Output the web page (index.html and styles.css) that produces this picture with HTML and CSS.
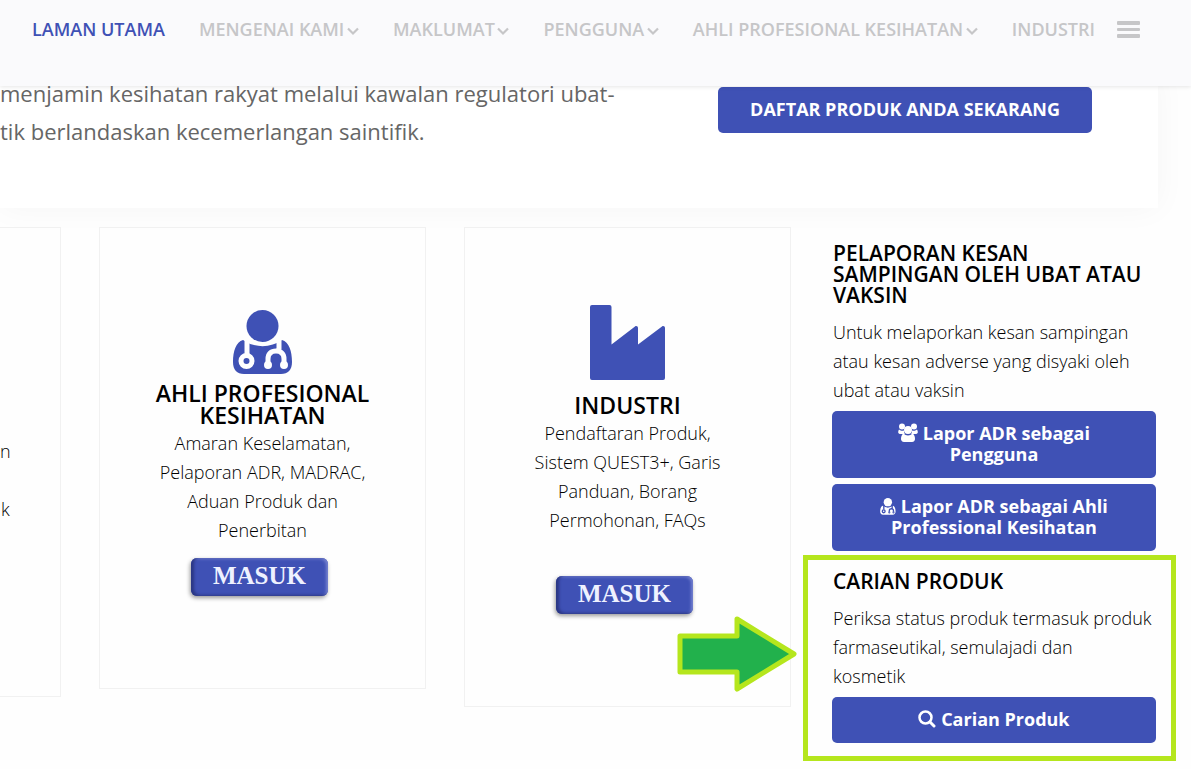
FILE: index.html
```html
<!DOCTYPE html>
<html lang="ms">
<head>
  <meta charset="UTF-8">
  <meta name="viewport" content="width=device-width, initial-scale=1.0">
  <title>Laman Utama</title>
  <link rel="stylesheet" href="styles.css">
</head>
<body>
<svg class="sprite" aria-hidden="true">
  <symbol id="user-md" viewBox="0 0 60 65">
    <path d="M10 30C3 32 0 41 0 52c0 8 4 12 11 12h37c7 0 11-4 11-12 0-11-3-20-10-22a34 34 0 0 1-39 0z" fill="currentColor"/>
    <circle cx="29.500" cy="16" r="16" fill="currentColor"/>
    <g class="tube">
      <path d="M14 28v16M46 28v12M35 53v-4c0-5 3-8 8-8s8 3 8 8v4" fill="none" stroke-width="5"/>
      <circle cx="13.500" cy="51" r="5.500" fill="none" stroke-width="5"/>
      <circle cx="35" cy="55" r="1.500" stroke-width="5"/>
      <circle cx="51" cy="55" r="1.500" stroke-width="5"/>
    </g>
  </symbol>
  <symbol id="chevron" viewBox="0 0 12 9">
    <path d="M1 1.500l5 5 5-5" fill="none" stroke="currentColor" stroke-width="2.200"/>
  </symbol>
</svg>

<header class="header">
  <nav class="nav">
    <a class="active" href="#">LAMAN UTAMA</a>
    <a href="#">MENGENAI KAMI <svg class="chevron"><use href="#chevron"/></svg></a>
    <a href="#">MAKLUMAT <svg class="chevron"><use href="#chevron"/></svg></a>
    <a href="#">PENGGUNA <svg class="chevron"><use href="#chevron"/></svg></a>
    <a href="#">AHLI PROFESIONAL KESIHATAN <svg class="chevron"><use href="#chevron"/></svg></a>
    <a href="#">INDUSTRI</a>
  </nav>
  <button class="menu" aria-label="Menu"><span></span><span></span><span></span></button>
</header>

<section class="hero">
  <p>menjamin kesihatan rakyat melalui kawalan regulatori ubat-<br>tik berlandaskan kecemerlangan saintifik.</p>
  <a class="btn" href="#">DAFTAR PRODUK ANDA SEKARANG</a>
</section>

<main class="columns">
  <article class="card card-cut">
    <p>n<br><br>k</p>
  </article>

  <article class="card card-ahli">
    <svg class="icon-md"><use href="#user-md"/></svg>
    <h2>AHLI PROFESIONAL KESIHATAN</h2>
    <p>Amaran Keselamatan, Pelaporan ADR, MADRAC, Aduan Produk dan Penerbitan</p>
    <a class="masuk" href="#">MASUK</a>
  </article>

  <article class="card card-industri">
    <svg class="icon-industry" viewBox="0 0 75 75">
      <path d="M2 0h17.500a2 2 0 0 1 2 2v37.500L45 21.500c1.500-1 3 0 3 1.500v16.500l24-18c1.500-1 3 0 3 1.500v50a2 2 0 0 1-2 2H2a2 2 0 0 1-2-2V2a2 2 0 0 1 2-2z" fill="currentColor"/>
    </svg>
    <h2>INDUSTRI</h2>
    <p>Pendaftaran Produk, Sistem QUEST3+, Garis Panduan, Borang Permohonan, FAQs</p>
    <a class="masuk" href="#">MASUK</a>
  </article>

  <aside class="sidebar">
    <section>
      <h3>PELAPORAN KESAN<br>SAMPINGAN OLEH UBAT ATAU<br>VAKSIN</h3>
      <p>Untuk melaporkan kesan sampingan atau kesan adverse yang disyaki oleh ubat atau vaksin</p>
      <a class="btn" href="#">
        <svg class="icon-users" viewBox="0 0 20 19" fill="currentColor">
          <circle cx="4" cy="3.500" r="3"/>
          <circle cx="16" cy="3.500" r="3"/>
          <path d="M1 6.500c2 1.500 3 1.500 5 1 0 2 0 2.500 1 3.500H2C-.5 11 0 8 1 6.500zM19 6.500c-2 1.500-3 1.500-5 1 0 2 0 2.500-1 3.500h5c2.500 0 2-3 1-4.500z"/>
          <circle cx="10" cy="7" r="4"/>
          <path d="M5.500 10.500c2.500 2.500 6.500 2.500 9 0 2 1 2.500 3.500 2.500 5.500 0 1.500-1 3-3 3H6c-2 0-3-1.500-3-3 0-2 .5-4.500 2.500-5.500z"/>
        </svg>
        Lapor ADR sebagai Pengguna
      </a>
      <a class="btn" href="#">
        <svg class="icon-md-small"><use href="#user-md"/></svg>
        Lapor ADR sebagai Ahli Professional Kesihatan
      </a>
    </section>

    <section class="carian">
      <h3>CARIAN PRODUK</h3>
      <p>Periksa status produk termasuk produk farmaseutikal, semulajadi dan<br>kosmetik</p>
      <a class="btn" href="#">
        <svg class="icon-search" viewBox="0 0 18 18" fill="none" stroke="currentColor">
          <circle cx="7.500" cy="7.500" r="6" stroke-width="2.500"/>
          <path d="M12 12l4 4" stroke-width="3" stroke-linecap="round"/>
        </svg>
        Carian Produk
      </a>
      <svg class="arrow" viewBox="0 0 120 76">
        <path d="M3 20h57V3l57 35-57 35V56H3z"/>
      </svg>
    </section>
  </aside>
</main>
</body>
</html>
```

FILE: styles.css
```css
* {
  box-sizing: border-box;
}

body {
  margin: 0;
  font-family: "Open Sans", sans-serif;
  font-size: 18px;
  line-height: 29px;
  color: #000;
  background: #fefefe;
}

h2, h3, p {
  margin: 0;
}

a {
  text-decoration: none;
}

.sprite {
  display: none;
}

/* header */
.header {
  position: relative;
  z-index: 1;
  display: flex;
  gap: 22px;
  height: 86px;
  padding: 15px 32px 0;
  background: #fafafc;
  box-shadow: 0 1px 4px rgba(0, 0, 0, 0.1);
}

.nav {
  display: flex;
  gap: 34px;
}

.nav a {
  color: #c6c6c8;
  font-weight: 600;
  white-space: nowrap;
}

.nav .active {
  color: #3f51b5;
}

.chevron {
  width: 12px;
  height: 9px;
  margin-left: -2px;
}

.menu {
  display: flex;
  flex-direction: column;
  gap: 3px;
  width: 23px;
  height: 29px;
  padding: 6px 0;
  border: none;
  background: none;
}

.menu span {
  width: 23px;
  height: 4px;
  border-radius: 1px;
  background: #c6c6c8;
}

/* hero */
.hero {
  display: flex;
  justify-content: space-between;
  align-items: flex-start;
  height: 134px;
  margin: -12px 33px 0 0;
  padding-right: 66px;
  background: #fff;
  box-shadow: 0 0 30px rgba(0, 0, 0, 0.04);
}

.hero p {
  font-size: 22px;
  line-height: 38px;
  color: #666;
}

.btn {
  display: block;
  padding: 12px 32px 13px;
  border-radius: 5px;
  background: #3f51b5;
  color: #fff;
  font-weight: 700;
  line-height: 21px;
  text-align: center;
}

.hero .btn {
  margin-top: 13px;
}

/* columns */
.columns {
  display: grid;
  grid-template-columns: 61px 1fr 1fr 1fr;
  gap: 38px;
  align-items: start;
  padding: 19px 35px 26px 0;
}

.card {
  display: flex;
  flex-direction: column;
  align-items: center;
  padding: 0 45px;
  border: 1px solid #f1f1f1;
  background: #fefefe;
  color: #3f51b5;
  text-align: center;
}

.card h2 {
  margin-bottom: 3px;
  color: #000;
  font-size: 23px;
  font-weight: 600;
  line-height: 22px;
}

.card p {
  padding: 0 10px;
  color: #000;
  font-weight: 300;
}

.card-cut {
  align-items: flex-start;
  border-left: none;
  padding: 209px 0 172px;
}

.card-cut p {
  padding: 0;
}

.card-ahli {
  padding-top: 82px;
  padding-bottom: 92px;
}

.card-industri {
  padding-top: 77px;
  padding-bottom: 92px;
}

.icon-md {
  width: 60px;
  height: 65px;
  margin-bottom: 7px;
}

.icon-industry {
  width: 75px;
  height: 75px;
  margin-bottom: 14px;
}

.tube {
  fill: var(--tube, #fefefe);
  stroke: var(--tube, #fefefe);
}

.icon-md-small {
  --tube: #3f51b5;
  width: 16px;
  height: 17px;
}

.masuk {
  width: 137px;
  height: 38px;
  margin: 13px 6px 0 0;
  border-radius: 6px;
  background: #3f51b5;
  box-shadow: inset 3px -1px 3px #2b3784, inset -2px 1px 3px #7582cf, -1px 2px 4px rgba(0, 0, 0, 0.4);
  color: #eef1ff;
  font-family: "Liberation Serif", serif;
  font-size: 25px;
  font-weight: 700;
  line-height: 36px;
}

.card-industri .masuk {
  margin-top: 41px;
}

/* sidebar */
.sidebar {
  padding: 16px 0 0 3px;
}

.sidebar h3 {
  padding-left: 1px;
  color: #000;
  font-size: 21px;
  font-weight: 600;
  line-height: 21px;
}

.sidebar p {
  margin: 12px 0 6px;
  padding-left: 1px;
  font-weight: 300;
}

.sidebar .btn {
  margin-top: 6px;
  padding: 12px 40px 13px;
}

.sidebar .btn svg {
  vertical-align: -2px;
}

.icon-users {
  width: 20px;
  height: 19px;
}

.icon-search {
  width: 18px;
  height: 18px;
}

.carian {
  position: relative;
  margin-top: 20px;
}

/* highlight frame and arrow over the page */
.carian::after {
  content: "";
  position: absolute;
  inset: -16px -20px -18px -29px;
  border: 5px solid #b5e61d;
  pointer-events: none;
}

.arrow {
  position: absolute;
  top: 45px;
  left: -155px;
  width: 120px;
  height: 76px;
  fill: #22b14c;
  stroke: #b5e61d;
  stroke-width: 5px;
  stroke-linejoin: round;
}
```
